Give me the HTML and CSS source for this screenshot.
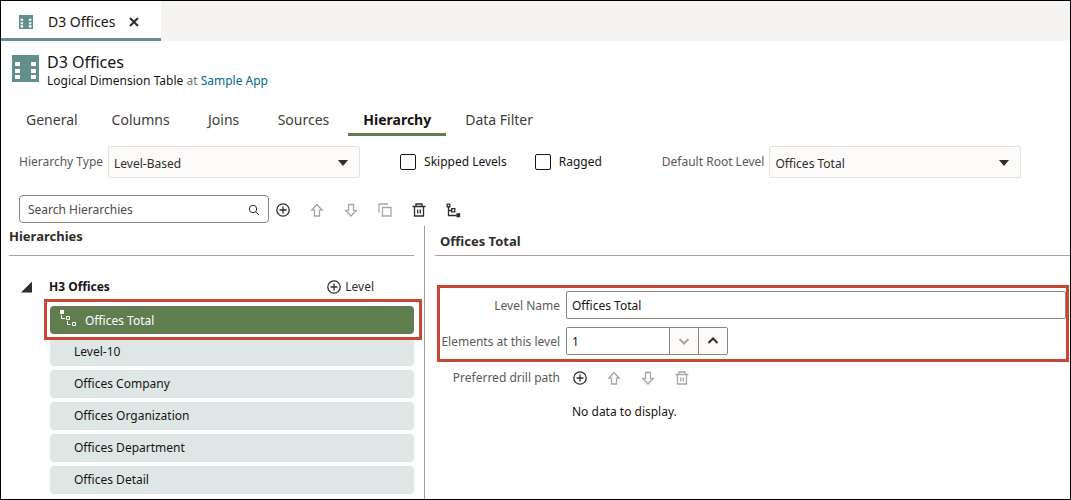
FILE: index.html
```html
<!DOCTYPE html>
<html lang="en">
<head>
    <meta charset="UTF-8">
    <meta name="viewport" content="width=device-width, initial-scale=1.0">
    <title>D3 Offices</title>
    <link rel="stylesheet" href="styles.css">
</head>
<body>
    <svg class="sprite" aria-hidden="true">
        <symbol id="i-table" viewBox="0 0 27 27">
            <path fill="#628f8c" d="M0 0h27v27H0z"/>
            <path fill="#fff" d="M3 7h5v4H3zM3 14h5v4H3zM3 20h5v4H3zM19 7h5v4h-5zM19 14h5v4h-5zM19 20h5v4h-5z"/>
        </symbol>
        <symbol id="i-add" viewBox="0 0 16 16">
            <circle cx="8" cy="8" r="6.2"/>
            <path d="M8 4.5v7M4.5 8h7"/>
        </symbol>
        <symbol id="i-up" viewBox="0 0 16 16">
            <path d="M8 2.5L2.8 8.2H5.5V14h5V8.2h2.7z"/>
        </symbol>
        <symbol id="i-down" viewBox="0 0 16 16">
            <path d="M8 14L2.8 8.3H5.5V2.5h5v5.8h2.7z"/>
        </symbol>
        <symbol id="i-copy" viewBox="0 0 16 16">
            <path d="M5.5 5.5h8.5v8.5H5.5zM2 10.5V2h9"/>
        </symbol>
        <symbol id="i-trash" viewBox="0 0 16 16">
            <path d="M1.5 4.5h13M5 4.5v-2.5h6v2.5M3.5 4.5v9.5h9V4.5M6.7 7.5v4M9.3 7.5v4"/>
        </symbol>
        <symbol id="i-tree" viewBox="0 0 16 16">
            <path d="M3.5 4v9.5h8M3.5 8.5h3M2.2 2.2h2.6v2.6H2.2zM6.7 6.7h3.1v3.1H6.7z"/>
            <path d="M12 12h2.5v2.5H12z" fill="currentColor"/>
        </symbol>
    </svg>

    <div class="app">
        <div class="tab-strip">
            <div class="file-tab">
                <svg class="tab-icon"><use href="#i-table"/></svg>
                <span>D3 Offices</span>
                <button class="close" type="button" aria-label="Close">
                    <svg viewBox="0 0 10 10"><path d="M1 1l8 8M9 1l-8 8"/></svg>
                </button>
            </div>
        </div>

        <header class="page-header">
            <svg class="page-icon"><use href="#i-table"/></svg>
            <div>
                <h1>D3 Offices</h1>
                <p>Logical Dimension Table <span class="muted">at</span> <a href="#">Sample App</a></p>
            </div>
        </header>

        <nav class="page-nav">
            <a href="#">General</a>
            <a href="#">Columns</a>
            <a href="#">Joins</a>
            <a href="#">Sources</a>
            <a href="#" class="active">Hierarchy</a>
            <a href="#">Data Filter</a>
        </nav>

        <div class="options">
            <div class="field">
                <label for="type">Hierarchy Type</label>
                <div class="select">
                    <select id="type"><option>Level-Based</option></select>
                </div>
            </div>
            <div class="checks">
                <label class="check"><input type="checkbox">Skipped Levels</label>
                <label class="check"><input type="checkbox">Ragged</label>
            </div>
            <div class="field">
                <label for="root">Default Root Level</label>
                <div class="select">
                    <select id="root"><option>Offices Total</option></select>
                </div>
            </div>
        </div>

        <div class="toolbar">
            <div class="search">
                <input type="text" placeholder="Search Hierarchies" aria-label="Search Hierarchies">
                <svg viewBox="0 0 12 12"><circle cx="5" cy="5" r="3.7"/><path d="M7.7 7.7l3.3 3.3"/></svg>
            </div>
            <div class="icons">
                <button type="button" aria-label="Add"><svg><use href="#i-add"/></svg></button>
                <button type="button" aria-label="Move up" disabled><svg><use href="#i-up"/></svg></button>
                <button type="button" aria-label="Move down" disabled><svg><use href="#i-down"/></svg></button>
                <button type="button" aria-label="Duplicate" disabled><svg><use href="#i-copy"/></svg></button>
                <button type="button" aria-label="Delete"><svg><use href="#i-trash"/></svg></button>
                <button type="button" aria-label="Show tree"><svg><use href="#i-tree"/></svg></button>
            </div>
        </div>

        <main class="panes">
            <section class="tree">
                <h2>Hierarchies</h2>
                <div class="tree-head">
                    <button class="toggle" type="button" aria-label="Collapse"></button>
                    <strong>H3 Offices</strong>
                    <button class="add-level" type="button"><svg><use href="#i-add"/></svg>Level</button>
                </div>
                <ul class="levels">
                    <li class="selected">
                        <svg viewBox="0 0 18 18">
                            <path fill="#fff" d="M1 1h4v4H1z"/>
                            <path fill="none" stroke="#fff" d="M2.5 6v3.5H6M7.5 7.5h3v3h-3zM8.5 12v3.5h3M13.5 13.5h3v3h-3z"/>
                        </svg>
                        Offices Total
                    </li>
                    <li>Level-10</li>
                    <li>Offices Company</li>
                    <li>Offices Organization</li>
                    <li>Offices Department</li>
                    <li>Offices Detail</li>
                </ul>
            </section>

            <section class="detail">
                <h2>Offices Total</h2>
                <div class="callout">
                    <div class="row">
                        <label for="level-name">Level Name</label>
                        <input id="level-name" class="text" type="text" value="Offices Total">
                    </div>
                    <div class="row">
                        <label for="elements">Elements at this level</label>
                        <div class="stepper">
                            <input id="elements" type="text" value="1">
                            <button type="button" aria-label="Decrease" disabled><svg viewBox="0 0 12 12"><path d="M1.5 4L6 8.5 10.5 4"/></svg></button>
                            <button type="button" aria-label="Increase"><svg viewBox="0 0 12 12"><path d="M1.5 8L6 3.5 10.5 8"/></svg></button>
                        </div>
                    </div>
                </div>
                <div class="row drill">
                    <span class="label">Preferred drill path</span>
                    <div class="icons">
                        <button type="button" aria-label="Add"><svg><use href="#i-add"/></svg></button>
                        <button type="button" aria-label="Move up" disabled><svg><use href="#i-up"/></svg></button>
                        <button type="button" aria-label="Move down" disabled><svg><use href="#i-down"/></svg></button>
                        <button type="button" aria-label="Delete" disabled><svg><use href="#i-trash"/></svg></button>
                    </div>
                </div>
                <p class="empty">No data to display.</p>
            </section>
        </main>
    </div>
</body>
</html>
```
FILE: styles.css
```css
*{
    box-sizing: border-box;
}
body{
    margin: 0;
    font-family: "Noto Sans", "Open Sans", sans-serif;
    font-size: 12px;
    line-height: 16px;
    color: #161513;
    background-color: #fff;
}
h1, h2, p, ul{
    margin: 0;
    padding: 0;
}
button, input, select{
    font: inherit;
    color: inherit;
    margin: 0;
}
button{
    padding: 0;
    border: none;
    background: none;
    cursor: pointer;
}
a{
    text-decoration: none;
}
.sprite{
    display: none;
}
.app{
    display: flex;
    flex-direction: column;
    min-height: 100vh;
    border: 1px solid #000;
}

/* open file tabs */
.tab-strip{
    display: flex;
    height: 40px;
    background-color: #f5f4f2;
}
.file-tab{
    display: flex;
    align-items: center;
    padding: 5px 22px 0 18px;
    font-size: 14px;
    background-color: #fff;
    border-bottom: 3px solid #628f8c;
}
.tab-icon{
    width: 14px;
    height: 14px;
    margin-right: 15px;
}
.close{
    display: flex;
    margin-left: 14px;
}
.close svg{
    width: 10px;
    height: 10px;
    stroke: #312d2a;
    stroke-width: 2;
}

.page-header{
    display: flex;
    gap: 8px;
    padding: 11px;
}
.page-icon{
    width: 27px;
    height: 27px;
    margin-top: 3px;
}
.page-header h1{
    font-size: 16px;
    line-height: 21px;
    font-weight: 400;
}
.page-header a{
    color: #00688c;
}
.muted{
    color: #75736f;
}

.page-nav{
    display: flex;
    gap: 4px;
    padding: 4px 10px 0;
}
.page-nav a{
    min-width: 70px;
    padding: 6px 15px 3px;
    font-size: 14px;
    line-height: 20px;
    text-align: center;
    color: #403c38;
    border-bottom: 3px solid transparent;
}
.page-nav .active{
    font-weight: 700;
    color: #161513;
    border-bottom-color: #5f7d4f;
}

/* hierarchy options */
.options{
    display: flex;
    padding: 10px 18px 0;
}
.field{
    display: flex;
    align-items: center;
    gap: 5px;
}
.field label, .row label, .label{
    color: #5b5955;
}
.select{
    position: relative;
    width: 252px;
}
.select::after{
    content: "";
    position: absolute;
    right: 12px;
    top: 14px;
    border: 5px solid transparent;
    border-top: 6px solid #312d2a;
    border-bottom: none;
    pointer-events: none;
}
.select select{
    width: 100%;
    height: 32px;
    padding: 4px 5px 0;
    appearance: none;
    color: #312d2a;
    background-color: #fcfbfa;
    border: 1px solid #e4e3e1;
    border-radius: 2px;
}
.checks{
    display: flex;
    gap: 28px;
    margin: 0 60px 0 40px;
}
.check{
    display: flex;
    align-items: center;
    gap: 8px;
}
.check input{
    width: 16px;
    height: 16px;
    appearance: none;
    border: 1px solid #161513;
    border-radius: 2px;
}

.toolbar{
    display: flex;
    align-items: center;
    gap: 6px;
    padding: 17px 18px 3px;
}
.search{
    display: flex;
    align-items: center;
    width: 250px;
    height: 28px;
    padding: 2px 8px 0;
    border: 1px solid #8b8580;
    border-radius: 4px;
}
.search input{
    flex: 1;
    min-width: 0;
    padding: 0;
    border: none;
    outline: none;
    background: none;
}
.search input::placeholder{
    color: #4f4b47;
    opacity: 1;
}
.search svg{
    width: 12px;
    height: 12px;
    fill: none;
    stroke: #312d2a;
}
.icons{
    display: flex;
    gap: 18px;
    color: #312d2a;
}
.toolbar .icons{
    padding-top: 2px;
}
.icons button{
    display: flex;
}
.icons svg, .add-level svg{
    width: 16px;
    height: 16px;
    fill: none;
    stroke: currentColor;
    stroke-width: 1.3;
}
.icons button:disabled{
    color: #a8a6a4;
}

.panes{
    display: flex;
    flex: 1;
}
h2{
    font-size: 13px;
    color: #312d2a;
    border-bottom: 1px solid #aaa39d;
}

/* left pane */
.tree{
    width: 424px;
    padding: 0 10px 4px 8px;
    border-right: 1px solid #a19c98;
}
.tree h2{
    padding: 2px 0 11px;
}
.tree-head{
    display: flex;
    align-items: center;
    padding: 23px 40px 11px 12px;
}
.toggle{
    width: 11px;
    height: 11px;
    background-color: #312d2a;
    clip-path: polygon(100% 0, 100% 100%, 0 100%);
}
.tree-head strong{
    margin-left: 17px;
}
.add-level{
    display: flex;
    align-items: center;
    gap: 3px;
    margin-left: auto;
    color: #312d2a;
}
.levels{
    display: flex;
    flex-direction: column;
    gap: 4px;
    padding-left: 41px;
    list-style: none;
}
.levels li{
    padding: 6px 24px;
    background-color: #dfe7e6;
    border-radius: 4px;
}
.levels .selected{
    position: relative;
    display: flex;
    gap: 8px;
    padding: 7px 9px 5px;
    color: #fff;
    background-color: #5f7d4f;
}
.selected svg{
    width: 18px;
    height: 18px;
    margin: -4px 0 0;
}
.selected::after{
    content: "";
    position: absolute;
    inset: -7px -8px -6px -6px;
    border: 3px solid #c74634;
}

/* right pane */
.detail{
    flex: 1;
    padding-left: 10px;
}
.detail h2{
    padding: 7px 5px 6px;
}
.callout{
    display: grid;
    gap: 8px;
    margin: 29px 1px 0 2px;
    padding: 3px 0 4px;
    border: 3px solid #c74634;
}
.row{
    display: flex;
    align-items: center;
    gap: 6px;
}
.row label, .label{
    width: 120px;
    text-align: right;
    white-space: nowrap;
}
.callout label{
    padding-top: 2px;
}
.text{
    flex: 1;
    height: 28px;
    padding: 0 5px;
    border: 1px solid #8b8580;
    border-radius: 2px;
}
.stepper{
    display: flex;
    width: 162px;
    height: 28px;
    border: 1px solid #8b8580;
    border-radius: 2px;
}
.stepper input{
    flex: 1;
    min-width: 0;
    padding: 2px 5px 0;
    border: none;
}
.stepper button{
    display: flex;
    align-items: center;
    justify-content: center;
    width: 29px;
    color: #312d2a;
    background-color: #fcfbfa;
    border-left: 1px solid #8b8580;
}
.stepper button:disabled{
    color: #a8a6a4;
}
.stepper svg{
    width: 12px;
    height: 12px;
    fill: none;
    stroke: currentColor;
    stroke-width: 2;
}
.drill{
    gap: 12px;
    margin: 8px 0 18px 5px;
}
.empty{
    padding-left: 137px;
}
```
